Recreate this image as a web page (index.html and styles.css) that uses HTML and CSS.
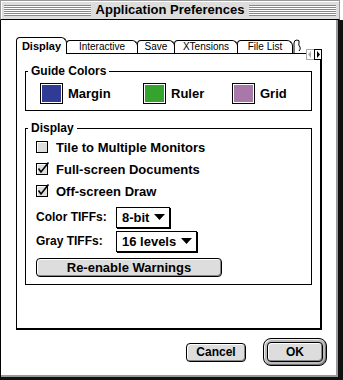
FILE: index.html
```html
<!DOCTYPE html>
<html lang="en">
<head>
    <meta charset="UTF-8">
    <meta name="viewport" content="width=device-width, initial-scale=1.0">
    <link rel="stylesheet" href="styles.css">
</head>
<body>
    <div class="window">
        <div class="titlebar">
            <div class="stripes"></div>
            <div class="title">Application Preferences</div>
            <div class="stripes"></div>
        </div>

        <div class="body">
            <div class="tabs-row">
                <div class="tabs">
                    <div class="tab active">Display</div>
                    <div class="tab">Interactive</div>
                    <div class="tab">Save</div>
                    <div class="tab">XTensions</div>
                    <div class="tab">File List</div>
                    <div class="tab-cut">
                        <svg width="9" height="14" viewBox="0 0 9 14"><path d="M1 14 V4 Q1 1 4 1 Q7 1 6 4 Q5 6 7 8 Q8 10 6 12" fill="none" stroke="#000"/></svg>
                    </div>
                </div>
                <div class="tab-scroll">
                    <span class="arrow disabled"><svg width="8" height="11" viewBox="0 0 8 11"><path d="M5 2 L2 5.5 L5 9 Z" fill="#aaa"/></svg></span>
                    <span class="arrow"><svg width="8" height="11" viewBox="0 0 8 11"><path d="M3 2 L6 5.5 L3 9 Z" fill="#000"/></svg></span>
                </div>
            </div>

            <div class="panel">
                <fieldset class="group">
                    <legend>Guide Colors</legend>
                    <div class="swatches">
                        <div class="color"><span class="swatch margin"></span>Margin</div>
                        <div class="color"><span class="swatch ruler"></span>Ruler</div>
                        <div class="color"><span class="swatch grid"></span>Grid</div>
                    </div>
                </fieldset>

                <fieldset class="group">
                    <legend>Display</legend>
                    <div class="group-body">
                        <div class="check-row">
                            <svg width="14" height="14" viewBox="0 0 14 14"><rect x="0.5" y="1.5" width="11" height="11" fill="#ddd" stroke="#000"/><path d="M1.5 11.5 V2.5 H10.5" fill="none" stroke="#fff"/></svg>
                            Tile to Multiple Monitors
                        </div>
                        <div class="check-row">
                            <svg width="14" height="14" viewBox="0 0 14 14"><rect x="0.5" y="1.5" width="11" height="11" fill="#ddd" stroke="#000"/><path d="M1.5 11.5 V2.5 H9" fill="none" stroke="#fff"/><path d="M2.5 6.5 L5 10 L12.5 0.5" fill="none" stroke="#000" stroke-width="1.6"/></svg>
                            Full-screen Documents
                        </div>
                        <div class="check-row">
                            <svg width="14" height="14" viewBox="0 0 14 14"><rect x="0.5" y="1.5" width="11" height="11" fill="#ddd" stroke="#000"/><path d="M1.5 11.5 V2.5 H9" fill="none" stroke="#fff"/><path d="M2.5 6.5 L5 10 L12.5 0.5" fill="none" stroke="#000" stroke-width="1.6"/></svg>
                            Off-screen Draw
                        </div>

                        <div class="field-row first">
                            <span class="field-label">Color TIFFs:</span>
                            <span class="popup">8-bit <svg width="11" height="6" viewBox="0 0 11 6"><path d="M0 0 H11 L5.5 6 Z" fill="#000"/></svg></span>
                        </div>
                        <div class="field-row">
                            <span class="field-label">Gray TIFFs:</span>
                            <span class="popup">16 levels <svg width="11" height="6" viewBox="0 0 11 6"><path d="M0 0 H11 L5.5 6 Z" fill="#000"/></svg></span>
                        </div>

                        <button class="button wide">Re-enable Warnings</button>
                    </div>
                </fieldset>
            </div>

            <div class="actions">
                <button class="button cancel">Cancel</button>
                <div class="default-ring">
                    <button class="button ok">OK</button>
                </div>
            </div>
        </div>
    </div>
</body>
</html>
```

FILE: styles.css
```css
body {
    margin: 0;
    background: #fff;
    font-family: "Liberation Sans", Arial, sans-serif;
    color: #000;
}

.window {
    width: 343px;
    height: 380px;
    display: flex;
    flex-direction: column;
    box-sizing: border-box;
}

.titlebar {
    height: 20px;
    box-sizing: border-box;
    background: #ddd;
    border: 1px solid #999;
    border-bottom: 1px solid #000;
    box-shadow: inset 1px 1px 0 #fff;
    display: flex;
    align-items: center;
    padding: 0 3px;
    margin-right: 3px;
}

.stripes {
    flex: 1;
    height: 11px;
    background: repeating-linear-gradient(#888 0 1px, #fff 1px 2px);
}

.title {
    font-weight: bold;
    font-size: 13px;
    line-height: 12px;
    padding: 0 5px;
}

.body {
    flex: 1;
    border-left: 1px solid #000;
    border-right: 5px solid #111;
    border-bottom: 3px solid #111;
    box-shadow: inset -2px -2px 0 #999;
    padding: 17px 0 0 15px;
    display: flex;
    flex-direction: column;
}

/* tabs */
.tabs-row {
    position: relative;
    width: 306px;
}

.tabs {
    display: flex;
    align-items: flex-end;
    height: 16px;
}

.tab {
    height: 12px;
    box-sizing: content-box;
    border: 1px solid #000;
    border-bottom: none;
    border-radius: 4px 6px 0 0;
    margin-right: -1px;
    font-size: 10px;
    line-height: 12px;
    text-align: center;
    background: #fff;
}

.tab:nth-child(1) { width: 49px; }
.tab:nth-child(2) { width: 70px; }
.tab:nth-child(3) { width: 36px; }
.tab:nth-child(4) { width: 62px; }
.tab:nth-child(5) { width: 54px; }

.tab.active {
    height: 16px;
    font-weight: bold;
    font-size: 11px;
    line-height: 16px;
    position: relative;
    z-index: 1;
    margin-bottom: -1px;
}

.tab-cut {
    height: 14px;
    margin-left: 1px;
}

.tab-scroll {
    position: absolute;
    right: 0;
    top: 12px;
    display: flex;
    z-index: 2;
    background: #fff;
}

.arrow {
    width: 8px;
    height: 11px;
    box-sizing: border-box;
    border: 1px solid #000;
    display: flex;
}

.arrow svg {
    margin: -1px;
}

.arrow.disabled {
    border-color: #aaa;
    border-right: none;
}

.panel {
    width: 306px;
    height: 277px;
    box-sizing: border-box;
    border: 1px solid #000;
    border-width: 1px 2px 2px 1px;
    padding: 10px 8px 0 8px;
    display: flex;
    flex-direction: column;
    gap: 10px;
}

/* group boxes */
.group {
    margin: 0;
    padding: 0;
    border: 1px solid #000;
    min-width: 0;
}

.group legend {
    font-weight: bold;
    font-size: 12px;
    line-height: 15px;
    padding: 0 3px;
    margin-left: 2px;
}

.swatches {
    display: grid;
    grid-template-columns: 103px 89px auto;
    padding: 4px 0 6px 14px;
    font-weight: bold;
    font-size: 13px;
}

.color {
    display: flex;
    align-items: center;
    gap: 5px;
}

.swatch {
    width: 23px;
    height: 21px;
    box-sizing: border-box;
    border: 1px solid #000;
    box-shadow: inset 0 0 0 1px #fff;
}

.swatch.margin { background: #2f3b95; }
.swatch.ruler { background: #35a42f; }
.swatch.grid { background: #a778a9; }

.group-body {
    padding: 0 0 7px 10px;
    font-weight: bold;
    font-size: 12px;
}

.check-row {
    height: 22px;
    display: flex;
    align-items: center;
    gap: 6px;
    font-size: 13px;
}

.field-row {
    height: 24px;
    display: flex;
    align-items: center;
}

.field-row.first {
    margin-top: 3px;
}

.field-label {
    width: 80px;
}

.popup {
    height: 21px;
    box-sizing: border-box;
    border: 1px solid #000;
    box-shadow: 1px 1px 0 #000;
    padding: 0 4px 0 5px;
    display: flex;
    align-items: center;
    gap: 5px;
    margin-right: 1px;
    font-size: 13px;
}

/* buttons */
.button {
    font-family: inherit;
    font-weight: bold;
    font-size: 12px;
    color: #000;
    background: #ddd;
    border: 1px solid #000;
    border-radius: 4px;
    box-shadow: inset 1px 1px 0 #fff, inset -1px -1px 0 #888;
    padding: 0;
    height: 19px;
}

.button.wide {
    display: block;
    width: 186px;
    margin-top: 5px;
    font-size: 13px;
}

.actions {
    display: flex;
    justify-content: flex-end;
    align-items: center;
    gap: 17px;
    margin-top: 8px;
    padding-right: 11px;
}

.button.cancel {
    width: 60px;
}

.default-ring {
    width: 64px;
    height: 28px;
    box-sizing: border-box;
    border: 1px solid #000;
    border-radius: 8px;
    padding: 3px;
    background: #bbb;
    box-shadow: inset 1px 1px 0 #eee, inset -1px -1px 0 #777;
}

.button.ok {
    width: 56px;
    height: 20px;
}
```
